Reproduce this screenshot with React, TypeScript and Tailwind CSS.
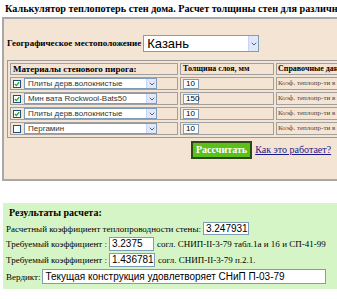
import { ChevronDown } from 'lucide-react';

const serif = { fontFamily: '"Liberation Serif", "Times New Roman", serif' };
const sans = { fontFamily: '"Liberation Sans", Arial, sans-serif' };

const layers = [
  { checked: true, name: 'Плиты дерв.волокнистые', thick: '10' },
  { checked: true, name: 'Мин вата Rockwool-Bats50', thick: '150' },
  { checked: true, name: 'Плиты дерв.волокнистые', thick: '10' },
  { checked: false, name: 'Пергамин', thick: '10' },
];

function Select({ value, className, textClass }: { value: string; className: string; textClass: string }) {
  return (
    <div className={`flex items-center border border-[#7f9db9] bg-white ${className}`}>
      <span className={`flex-1 truncate pl-[3px] ${textClass}`} style={sans}>
        {value}
      </span>
      <span className="flex h-full w-[10px] items-center justify-center border-l border-[#c3d3fd] bg-[#e1e8f7]">
        <ChevronDown size={8} strokeWidth={3} className="text-[#4d6185]" />
      </span>
    </div>
  );
}

function Check({ on }: { on: boolean }) {
  return (
    <span className="flex h-[8px] w-[8px] items-center justify-center border border-[#1c5180] bg-white">
      {on && (
        <svg width="6" height="6" viewBox="0 0 6 6">
          <path d="M0.8 3 L2.4 4.6 L5.2 1.2" fill="none" stroke="#21a121" strokeWidth="1.3" />
        </svg>
      )}
    </span>
  );
}

export default function App() {
  return (
    <div className="relative h-[299px] w-[337px] overflow-hidden bg-white text-black" style={serif}>
      <h1 className="whitespace-nowrap pl-[5px] pt-[2px] text-[10.2px] font-bold leading-[13px]">
        Калькулятор теплопотерь стен дома. Расчет толщины стен для различных материалов
      </h1>

      <div className="ml-[2px] mt-[2px] h-[164px] w-[345px] border-2 border-[#a8a8a8] bg-[#f4e4d4] pt-[16px]">
        <div className="flex items-center pl-[3px]">
          <span className="text-[9px] font-bold">Географическое местоположение</span>
          <Select value="Казань" className="ml-[2px] h-[17px] w-[116px]" textClass="text-[13px] leading-[15px]" />
        </div>

        <table className="ml-[3px] mt-[8px] w-[360px] table-fixed border-separate border-spacing-[2px] border border-[#9a9a9a]">
          <thead>
            <tr className="h-[12px]">
              <th className="w-[168px] border border-[#a0a0a0] pl-[2px] text-left text-[9px] font-bold leading-[10px]">
                Материалы стенового пирога:
              </th>
              <th className="w-[94px] border border-[#a0a0a0] pl-[2px] text-left text-[8px] font-bold leading-[10px]">
                Толщина слоя, мм
              </th>
              <th className="whitespace-nowrap border border-[#a0a0a0] pl-[1px] text-left text-[8px] font-bold leading-[10px]">
                Справочные данные
              </th>
            </tr>
          </thead>
          <tbody>
            {layers.map((l, i) => (
              <tr key={i} className="h-[12px]">
                <td className="border border-[#a0a0a0] py-0">
                  <div className="flex items-center gap-[3px] pl-[2px]">
                    <Check on={l.checked} />
                    <Select value={l.name} className="h-[11px] w-[133px]" textClass="text-[8px] leading-[9px] text-[#333]" />
                  </div>
                </td>
                <td className="border border-[#a0a0a0] py-0 pl-[2px]">
                  <div className="flex h-[10px] w-[16px] items-center border border-[#7f9db9] bg-white pl-[2px] text-[8px]" style={sans}>
                    {l.thick}
                  </div>
                </td>
                <td className="whitespace-nowrap border border-[#a0a0a0] pl-[1px] text-[7px] leading-[9px] text-[#444]">
                  Коэф. теплопр-ти в зоне
                </td>
              </tr>
            ))}
          </tbody>
        </table>

        <div className="mt-[3px] flex items-center pl-[187px]">
          <button className="h-[18px] border-2 border-[#2d4a12] bg-[#5cbf1a] px-[3px] text-[10px] font-bold leading-[12px] text-white">
            Рассчитать
          </button>
          <a href="#" className="ml-[3px] text-[10px] leading-[12px] text-[#1a1a8c] underline">
            Как это работает?
          </a>
        </div>
      </div>

      <div className="ml-[3px] mt-[22px] h-[86px] bg-[#d6f5c6] pl-[3px] pt-[3px] text-[9px] leading-[12px]">
        <div className="pl-[3px] text-[10px] font-bold leading-[14px]">Результаты расчета:</div>
        <div className="mt-[2px] flex items-center">
          <span>Расчетный коэффициент теплопроводности стены:</span>
          <span className="ml-[2px] flex h-[13px] w-[46px] items-center border border-[#7f9db9] bg-white pl-[2px] text-[10px]" style={sans}>
            3.247931
          </span>
        </div>
        <div className="mt-[2px] flex items-center">
          <span>Требуемый коэффициент :</span>
          <span className="ml-[2px] flex h-[14px] w-[45px] items-center border border-[#7f9db9] bg-white pl-[2px] text-[10px]" style={sans}>
            3.2375
          </span>
          <span className="ml-[3px]">согл. СНИП-II-3-79 табл.1а и 1б и СП-41-99</span>
        </div>
        <div className="mt-[2px] flex items-center">
          <span>Требуемый коэффициент :</span>
          <span className="ml-[2px] flex h-[14px] w-[46px] items-center border border-[#7f9db9] bg-white pl-[2px] text-[10px]" style={sans}>
            1.436781
          </span>
          <span className="ml-[3px]">согл. СНИП-II-3-79 п.2.1.</span>
        </div>
        <div className="mt-[2px] flex items-center">
          <span>Вердикт:</span>
          <span className="ml-[2px] flex h-[15px] w-[284px] items-center border border-[#7f9db9] bg-white pl-[2px] text-[10px]" style={sans}>
            Текущая конструкция удовлетворяет СНиП П-03-79
          </span>
        </div>
      </div>
    </div>
  );
}
